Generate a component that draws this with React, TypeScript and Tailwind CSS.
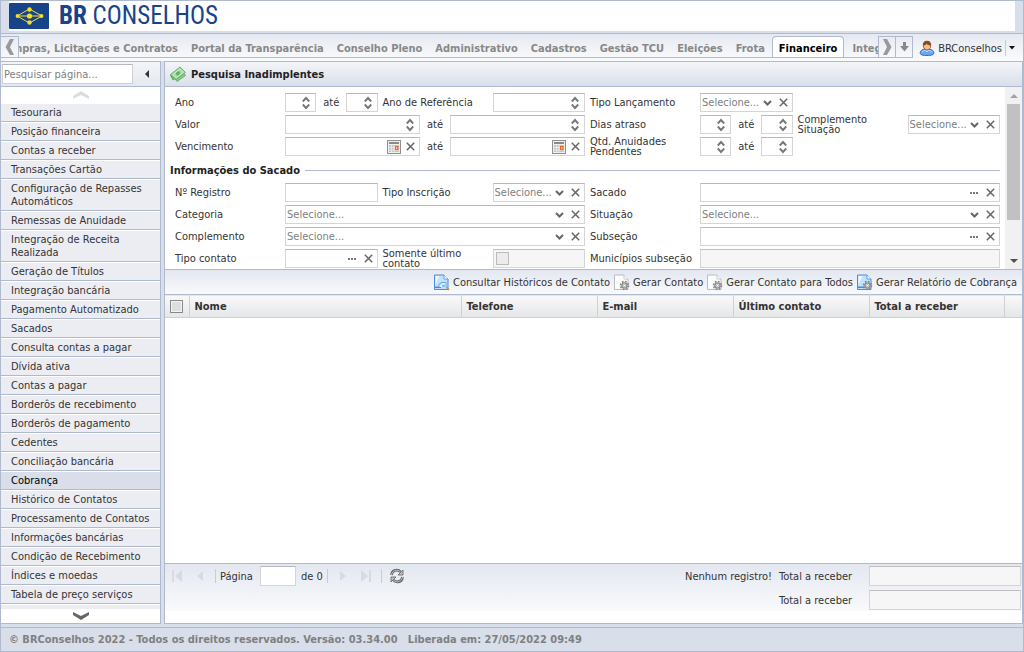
import React from "react";

const nav = ["Portal da Transparência", "Conselho Pleno", "Administrativo", "Cadastros", "Gestão TCU", "Eleições", "Frota"];

const menu = [
  "Tesouraria", "Posição financeira", "Contas a receber", "Transações Cartão",
  "Configuração de Repasses Automáticos", "Remessas de Anuidade", "Integração de Receita Realizada",
  "Geração de Títulos", "Integração bancária", "Pagamento Automatizado", "Sacados",
  "Consulta contas a pagar", "Dívida ativa", "Contas a pagar", "Borderôs de recebimento",
  "Borderôs de pagamento", "Cedentes", "Conciliação bancária", "Cobrança", "Histórico de Contatos",
  "Processamento de Contatos", "Informações bancárias", "Condição de Recebimento",
  "Índices e moedas", "Tabela de preço serviços",
];

function Logo() {
  return (
    <svg width="40" height="26" viewBox="0 0 40 26" aria-hidden="true" className="shrink-0">
      <rect width="40" height="26" rx="1" fill="#174489" />
      <path d="M8 13 20.500 6 33 13 20.500 20Z M10 13H31" fill="none" stroke="#f5dc2d" strokeWidth="1" />
      <g fill="#f5dc2d">
        <circle cx="8.500" cy="13" r="1.900" /><circle cx="32.500" cy="13" r="1.900" />
        <circle cx="20.500" cy="6.500" r="2.200" /><circle cx="20.500" cy="19.500" r="2.200" /><circle cx="20.500" cy="13" r="2.600" />
      </g>
    </svg>
  );
}

function Money() {
  return (
    <svg width="16" height="16" viewBox="0 0 16 16" aria-hidden="true">
      <path d="M5 12.500 13 6.500 15.500 9.500 7 15.500Z" fill="#8ccb8b" stroke="#4b9b55" strokeWidth=".7" />
      <path d="M.5 9.500 3 14 8 11Z" fill="#74bb76" stroke="#4b9b55" strokeWidth=".7" />
      <path d="M.5 8.500 10 1 15.500 6.500 6 13.500Z" fill="#a5dca1" stroke="#4fa35a" strokeWidth=".8" />
      <path d="M2.600 8.700 9.800 2.900 13.300 6.500 6.200 11.800Z" fill="none" stroke="#d5f2d0" strokeWidth=".7" />
      <ellipse cx="8" cy="7.300" rx="2.200" ry="1.800" fill="#63b06a" transform="rotate(-38 8 7.300)" />
    </svg>
  );
}

function User() {
  return (
    <svg width="16" height="16" viewBox="0 0 16 16" aria-hidden="true">
      <path d="M1.200 13C1.200 10.300 4 9 8 9s6.800 1.300 6.800 4c0 2-2.800 2.500-6.800 2.500S1.200 15 1.200 13Z" fill="#6aa7ee" stroke="#2a5fb0" strokeWidth=".9" />
      <path d="M3 12.500c.5-1.500 2-2 3.500-2.200L8 12l1.500-1.700c1.500.2 3 .7 3.500 2.200" fill="none" stroke="#c3defb" strokeWidth="1" />
      <path d="M3.800 5C3.800 2.200 5.500.7 8 .7s4.200 1.500 4.200 4.300C12.200 8 10.500 10 8 10S3.800 8 3.800 5Z" fill="#8a4b1c" />
      <path d="M4.600 5.600C6 5.400 7 4.600 7.500 3.800c1 1 2.300 1.500 3.900 1.600C11.400 8 10.200 9.500 8 9.500S4.600 8 4.600 5.600Z" fill="#f3bd8c" />
    </svg>
  );
}

function Doc({ blue, gear, lens }: { blue?: boolean; gear?: boolean; lens?: boolean }) {
  return (
    <svg width="16" height="17" viewBox="0 0 16 17" aria-hidden="true">
      <path d="M.5 1h9.500l4 4V15.500H.5Z" fill={blue ? "#c4e0fa" : "#fbfbfb"} stroke={blue ? "#4a8ed6" : "#bdbdbd"} />
      <path d="M1.500 2h4l-4 9Z" fill="#fff" opacity=".7" />
      <path d="M10 1v4h4" fill="#fff" stroke={blue ? "#4a8ed6" : "#bdbdbd"} strokeWidth=".8" />
      {blue && <path d="M1 12.500h6v1.500H1Z" fill="#3f8fe0" />}
      {lens && (
        <g>
          <path d="M5 13V10h2V8.500h5V13" fill="#e9f5ff" stroke="#6ba7e6" />
          <path d="M8 10.500h3V13H8Z" fill="#8fc0f0" />
          <path d="m12.500 13 2.500 3" stroke="#c89048" strokeWidth="1.600" />
        </g>
      )}
      {gear && (
        <g>
          <circle cx="10.500" cy="11.500" r="4" fill="none" stroke="#858585" strokeWidth="1.600" strokeDasharray="1.700 1.440" />
          <circle cx="10.500" cy="11.500" r="2.600" fill="#ddd" stroke="#8e8e8e" strokeWidth="1.400" />
          <circle cx="10.500" cy="11.500" r="1" fill="#fff" stroke="#888" strokeWidth=".5" />
        </g>
      )}
    </svg>
  );
}

function Cross() {
  return (
    <button type="button" aria-label="Limpar" className="flex w-[17px] shrink-0 items-center justify-center">
      <svg width="9" height="9" viewBox="0 0 9 9"><path d="M.8.8 8.200 8.200M8.200.8.8 8.200" stroke="#666" strokeWidth="1.500" /></svg>
    </button>
  );
}

function Dots() {
  return (
    <button type="button" aria-label="Pesquisar" className="flex w-[16px] shrink-0 items-center justify-center">
      <svg width="8" height="2" viewBox="0 0 8 2"><path d="M0 0h2v2H0zM3 0h2v2H3zM6 0h2v2H6z" fill="#777" /></svg>
    </button>
  );
}

function Calendar() {
  return (
    <button type="button" aria-label="Calendário" className="flex w-[16px] shrink-0 items-center justify-center">
      <svg width="14" height="14" viewBox="0 0 14 14">
        <rect x=".5" y=".5" width="13" height="13" fill="#f0f0f0" stroke="#8f8f8f" />
        <path d="M2 2h10v2H2Z" fill="#8a8a8a" />
        <path d="M2 5h10v7H2Z" fill="#c4c4c4" />
        <path d="M2 7.500h10M2 10h10M4.500 5v7M7 5v7" stroke="#f0f0f0" strokeWidth=".8" />
        <path d="M8 6h3.500v4H8Z" fill="#ee6a1f" />
        <path d="M9 7.500h1.200v1.200H9Z" fill="#fff" />
      </svg>
    </button>
  );
}

const box = "flex h-[19px] min-w-0 flex-1 border border-[#d5d5d5] border-t-[#b5b8c0] bg-white";

function Text({ label, children, off }: { label: string; children?: React.ReactNode; off?: boolean }) {
  return (
    <span className={off ? "flex h-[19px] min-w-0 flex-1 border border-[#d5d5d5] border-t-[#c0c0c0] bg-[#f6f6f6]" : box}>
      <input aria-label={label} disabled={off} className="w-0 min-w-0 flex-1 bg-transparent outline-none" />
      {children}
    </span>
  );
}

function Spin({ label }: { label: string }) {
  return (
    <Text label={label}>
      <button type="button" aria-label="Ajustar" className="flex w-[18px] shrink-0 items-center justify-center">
        <svg width="8" height="14" viewBox="0 0 8 14"><path d="M.8 5.500 4 2 7.200 5.500M.8 8.500 4 12 7.200 8.500" fill="none" stroke="#777" strokeWidth="1.900" /></svg>
      </button>
    </Text>
  );
}

function Pick({ label }: { label: string }) {
  return (
    <span className={box}>
      <select aria-label={label} className="w-0 min-w-0 flex-1 appearance-none bg-transparent pl-px text-[#808080] outline-none">
        <option>Selecione...</option>
      </select>
      <span className="flex w-[15px] shrink-0 items-center justify-center">
        <svg width="9" height="6" viewBox="0 0 9 6"><path d="M1 1 4.500 4.500 8 1" fill="none" stroke="#666" strokeWidth="2" /></svg>
      </span>
      <Cross />
    </span>
  );
}

function Field({ label, span, two, children }: { label: string; span?: boolean; two?: boolean; children: React.ReactNode }) {
  return (
    <div className={span ? "col-span-2 flex h-[19px] items-center" : "flex h-[19px] items-center"}>
      <span className={two ? "w-[110px] shrink-0 pr-4 leading-[10px]" : "w-[110px] shrink-0 whitespace-nowrap"}>{label}</span>
      {children}
    </div>
  );
}

const Ate = () => <span className="w-[30px] shrink-0 text-center">até</span>;

const PagerArrow = ({ d, label }: { d: string; label: string }) => (
  <button type="button" aria-label={label} className="flex h-4 w-4 items-center justify-center">
    <svg width="12" height="12" viewBox="0 0 12 12"><path d={d} fill="#d6dae2" /></svg>
  </button>
);

export default function App() {
  return (
    <div className="flex min-h-screen flex-col border border-[#b0bacf] bg-[#d8deea] font-['DejaVu_Sans_Condensed','DejaVu_Sans',sans-serif] text-[11px] leading-[13px] text-[#333]">
      <header className="mr-2 ml-[8px] flex h-[30px] items-center bg-white">
        <Logo />
        <h1 className="ml-[10px] font-['Roboto_Condensed','Liberation_Sans_Narrow',sans-serif] text-[25px] leading-[30px] whitespace-nowrap text-[#174489]">
          <b>BR</b> CONSELHOS
        </h1>
      </header>

      <nav className="mt-[2px] flex h-[28px] border-t border-[#b0bacf] bg-linear-to-b from-[#e6e9f1] to-[#fafbfd]">
        <div className="flex h-[24px] min-w-0 flex-1 border-b border-[#b0bacf] pt-[2px]">
          <button type="button" aria-label="Anterior" className="flex w-[18px] shrink-0 items-center justify-center border-t border-r border-[#b0bacf]">
            <svg width="10" height="16" viewBox="0 0 10 16"><path d="M5 0h4L5 8l4 8H5L.5 8Z" fill="#999" /></svg>
          </button>
          <div className="flex min-w-0 flex-1 gap-px overflow-hidden font-bold whitespace-nowrap text-[#888]">
            <a href="#compras" className="flex w-[165px] shrink-0 items-center justify-end overflow-hidden pt-1 pr-[6px] hover:text-black">Compras, Licitações e Contratos</a>
            {nav.map((t) => (
              <a key={t} href="#modulo" className="flex shrink-0 items-center px-[6px] pt-1 hover:text-black">{t}</a>
            ))}
            <a href="#financeiro" aria-current="page" className="flex shrink-0 items-center rounded-t border-x border-t border-[#b0bacf] bg-white px-[6px] pt-[3px] text-black">Financeiro</a>
            <a href="#integracao" className="flex shrink-0 items-center px-[7px] pt-1">Integração</a>
          </div>
          <button type="button" aria-label="Próximo" className="flex w-[18px] shrink-0 items-center justify-center border-x border-t border-[#b0bacf]">
            <svg width="10" height="16" viewBox="0 0 10 16"><path d="M5 0H1L5 8 1 16H5L9.500 8Z" fill="#999" /></svg>
          </button>
          <button type="button" aria-label="Lista" className="flex w-[17px] shrink-0 items-center justify-center border-t border-r border-[#b0bacf]">
            <svg width="9" height="10" viewBox="0 0 9 10"><path d="M3 0h3v4h3L4.500 9.500 0 4h3Z" fill="#888" /></svg>
          </button>
        </div>
        <button type="button" className="flex shrink-0 items-center gap-[3px] pt-px pr-2 pl-[6px]">
          <User /> BRConselhos
          <span className="h-4 border-l border-[#ccc]" />
          <svg width="6" height="4" viewBox="0 0 6 4"><path d="M0 0h6L3 3.500Z" fill="#111" /></svg>
        </button>
      </nav>

      <div className="flex flex-1 gap-[3px]">
        <aside className="flex w-[160px] shrink-0 flex-col border-y border-r border-[#b0bacf] bg-white">
          <div className="flex h-[25px] items-center border-b border-[#b0bacf] bg-linear-to-b from-[#f3f5f9] to-[#e4e8f0]">
            <input aria-label="Pesquisar página" placeholder="Pesquisar página..." className="ml-px h-[20px] w-[131px] border border-[#d0d0d0] border-t-[#b5b8c0] bg-white px-px placeholder:text-[#808080]" />
            <button type="button" aria-label="Recolher" className="flex flex-1 justify-center">
              <svg width="4" height="8" viewBox="0 0 4 8"><path d="M4 0v8L0 4Z" fill="#333" /></svg>
            </button>
          </div>
          <div className="flex h-[16px] items-center justify-center">
            <svg width="16" height="8" viewBox="0 0 16 8"><path d="M0 5 8 0l8 5v3L8 4 0 8Z" fill="#ddd" /></svg>
          </div>
          <nav className="flex flex-1 flex-col">
            {menu.map((m) => (
              <a key={m} href="#pagina" className={m === "Cobrança"
                ? "border-t border-b border-t-white border-b-[#b0bacf] bg-[#d9dee9] py-[2px] pr-1 pl-[10px] text-black"
                : "border-t border-b border-t-white border-b-[#b0bacf] bg-[#ecedf3] py-[2px] pr-1 pl-[10px]"}>{m}</a>
            ))}
            <span className="mt-px flex-1 bg-[#ecedf3]" />
          </nav>
          <div className="flex h-[14px] items-center justify-center">
            <svg width="16" height="8" viewBox="0 0 16 8"><path d="M0 0 8 4l8-4v3L8 8 0 3Z" fill="#666" /></svg>
          </div>
        </aside>

        <main className="flex min-w-0 flex-1 flex-col border border-[#b0bacf] bg-white">
          <h2 className="flex h-[25px] shrink-0 items-center gap-[5px] border-b border-[#b0bacf] bg-linear-to-b from-[#f4f5f9] to-[#d9dfea] pl-[5px] font-bold text-[#222]">
            <Money /> Pesquisa Inadimplentes
          </h2>

          <section className="flex h-[182px] shrink-0 overflow-hidden">
            <form className="min-w-0 flex-1 pt-[6px] pr-[5px] pl-[5px]">
              <div className="grid grid-cols-4 gap-x-[5px] gap-y-[3px] pl-[5px]">
                <Field label="Ano"><Spin label="Ano inicial" /><Ate /><Spin label="Ano final" /></Field>
                <Field label="Ano de Referência"><Spin label="Ano de Referência" /></Field>
                <Field label="Tipo Lançamento"><Pick label="Tipo Lançamento" /></Field>
                <span />
                <Field label="Valor" span><Spin label="Valor inicial" /><Ate /><Spin label="Valor final" /></Field>
                <Field label="Dias atraso"><Spin label="Dias inicial" /><Ate /><Spin label="Dias final" /></Field>
                <Field label="Complemento Situação" two><Pick label="Complemento Situação" /></Field>
                <Field label="Vencimento" span>
                  <Text label="Vencimento inicial"><Calendar /><Cross /></Text><Ate /><Text label="Vencimento final"><Calendar /><Cross /></Text>
                </Field>
                <Field label="Qtd. Anuidades Pendentes" two><Spin label="Anuidades inicial" /><Ate /><Spin label="Anuidades final" /></Field>
              </div>
              <div className="mt-2 mb-[6px] flex items-center gap-[5px] font-bold whitespace-nowrap text-[#222]">
                Informações do Sacado <span className="flex-1 border-t border-[#b0bacf]" />
              </div>
              <div className="grid grid-cols-4 gap-x-[5px] gap-y-[3px] pl-[5px]">
                <Field label="Nº Registro"><Text label="Nº Registro" /></Field>
                <Field label="Tipo Inscrição"><Pick label="Tipo Inscrição" /></Field>
                <Field label="Sacado" span><Text label="Sacado"><Dots /><Cross /></Text></Field>
                <Field label="Categoria" span><Pick label="Categoria" /></Field>
                <Field label="Situação" span><Pick label="Situação" /></Field>
                <Field label="Complemento" span><Pick label="Complemento" /></Field>
                <Field label="Subseção" span><Text label="Subseção"><Dots /><Cross /></Text></Field>
                <Field label="Tipo contato"><Text label="Tipo contato"><Dots /><Cross /></Text></Field>
                <Field label="Somente último contato" two>
                  <span className="flex h-[19px] min-w-0 flex-1 items-center border border-[#d5d5d5] border-t-[#c0c0c0] bg-[#f6f6f6] pl-[2px]">
                    <input type="checkbox" disabled aria-label="Somente último contato" className="h-[13px] w-[13px] appearance-none border border-[#bbb] bg-[#ececec]" />
                  </span>
                </Field>
                <Field label="Municípios subseção" span><Text label="Municípios subseção" off /></Field>
              </div>
            </form>
            <div aria-hidden="true" className="flex w-[17px] shrink-0 flex-col items-center bg-[#f1f1f1]">
              <span className="flex h-[17px] items-center"><svg width="8" height="4" viewBox="0 0 8 4"><path d="M0 4h8L4 0Z" fill="#a3a3a3" /></svg></span>
              <span className="h-[116px] w-[13px] bg-[#c1c1c1]" />
              <span className="mt-auto flex h-[17px] items-center"><svg width="8" height="4" viewBox="0 0 8 4"><path d="M0 0h8L4 4Z" fill="#505050" /></svg></span>
            </div>
          </section>

          <div className="flex h-[25px] shrink-0 items-center justify-end gap-1 border-t border-[#b0bacf] bg-linear-to-b from-[#e3e7f0] to-[#f9fafc] pr-[5px] whitespace-nowrap">
            <button type="button" className="flex items-center gap-[3px]"><Doc blue lens />Consultar Históricos de Contato</button>
            <button type="button" className="flex items-center gap-[3px]"><Doc gear />Gerar Contato</button>
            <button type="button" className="flex items-center gap-[3px]"><Doc gear />Gerar Contato para Todos</button>
            <button type="button" className="flex items-center gap-[3px]"><Doc blue gear />Gerar Relatório de Cobrança</button>
          </div>

          <div className="flex-1">
            <table className="w-full table-fixed border-collapse">
              <thead>
                <tr className="h-[23px] border-t border-b border-t-[#b0bacf] border-b-[#d0d0d0] bg-linear-to-b from-[#f9f9f9] to-[#e5e6e8]">
                  <th className="w-[24px] border-r border-[#d0d0d0] p-0">
                    <input type="checkbox" aria-label="Selecionar todos" className="mx-auto block h-[13px] w-[13px] appearance-none border border-[#888] bg-[#dcdee2] outline outline-[#f4f4f4] -outline-offset-2" />
                  </th>
                  <th className="border-r border-[#d0d0d0] px-[5px] text-left font-bold">Nome</th>
                  <th className="w-[136px] border-r border-[#d0d0d0] px-[5px] text-left font-bold">Telefone</th>
                  <th className="w-[136px] border-r border-[#d0d0d0] px-[5px] text-left font-bold">E-mail</th>
                  <th className="w-[136px] border-r border-[#d0d0d0] px-[5px] text-left font-bold">Último contato</th>
                  <th className="w-[135px] border-r border-[#d0d0d0] px-[5px] text-left font-bold">Total a receber</th>
                  <th className="w-[18px] p-0" />
                </tr>
              </thead>
              <tbody />
            </table>
          </div>

          <div className="mb-3 flex h-[48px] shrink-0 items-start border-t border-[#b0bacf] bg-linear-to-b from-[#e3e7f0] to-[#f9fafc] pt-[2px]">
            <div className="flex h-[20px] items-center pl-1">
              <PagerArrow label="Primeira" d="M1 0h2v12H1zM11 0v12L4 6Z" />
              <span className="w-[7px]" />
              <PagerArrow label="Anterior" d="M9 1v10L3 6Z" />
              <span className="ml-[7px] h-[14px] border-l border-[#ccc]" />
              <label htmlFor="pagina" className="ml-[4px] w-[40px]">Página</label>
              <input id="pagina" className="h-[20px] w-[36px] border border-[#d5d5d5] border-t-[#b5b8c0] bg-white" />
              <span className="ml-[5px]">de 0</span>
              <span className="ml-[4px] h-[14px] border-l border-[#ccc]" />
              <span className="w-[7px]" />
              <PagerArrow label="Próxima" d="M3 1v10l6-5Z" />
              <span className="w-[7px]" />
              <PagerArrow label="Última" d="M9 0h2v12H9zM1 0v12l7-6Z" />
              <span className="mx-[7px] h-[14px] border-l border-[#ccc]" />
              <button type="button" aria-label="Atualizar">
                <svg width="16" height="16" viewBox="0 0 16 16">
                  <path d="M2.500 7C2.800 4 5 2.200 7.800 2.200c1.700 0 2.900.7 3.700 1.800M13.500 9c-.3 3-2.500 4.800-5.300 4.800-1.700 0-2.900-.7-3.700-1.800" fill="none" stroke="#666" strokeWidth="2.800" />
                  <path d="M2.500 7C2.800 4 5 2.200 7.800 2.200c1.700 0 2.900.7 3.700 1.800M13.500 9c-.3 3-2.500 4.800-5.300 4.800-1.700 0-2.900-.7-3.700-1.800" fill="none" stroke="#bbb" strokeWidth="1" />
                  <path d="M14 2v5H9ZM2 14V9h5Z" fill="#c2c2c2" stroke="#606060" strokeWidth=".8" />
                </svg>
              </button>
            </div>
            <div className="ml-auto grid grid-cols-[auto_90px_152px] items-center gap-y-1 pr-px">
              <span className="pr-[7px]">Nenhum registro!</span>
              <label htmlFor="total1">Total a receber</label>
              <input id="total1" disabled className="h-[20px] w-full border border-[#d5d5d5] border-t-[#c0c0c0] bg-[#f6f6f6]" />
              <span />
              <label htmlFor="total2">Total a receber</label>
              <input id="total2" disabled className="h-[20px] w-full border border-[#d5d5d5] border-t-[#c0c0c0] bg-[#f6f6f6]" />
            </div>
          </div>
        </main>
      </div>

      <footer className="mt-[3px] flex h-[24px] items-center border-t border-[#b0bacf] pl-2 font-bold whitespace-pre text-[#808080]">
        © BRConselhos 2022 - Todos os direitos reservados. Versão: 03.34.00   Liberada em: 27/05/2022 09:49
      </footer>
    </div>
  );
}
